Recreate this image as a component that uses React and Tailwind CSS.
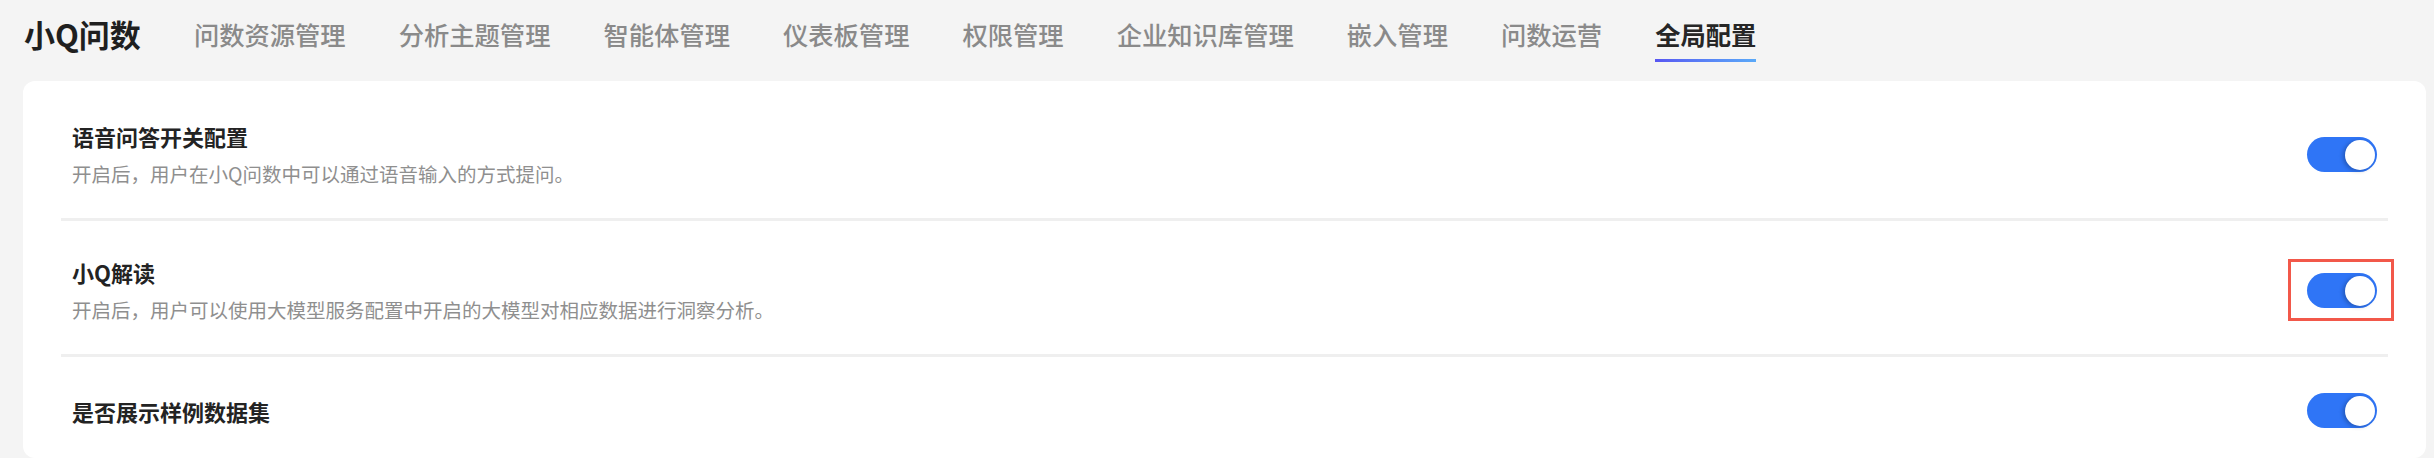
import React from 'react';

const navItems = ['问数资源管理', '分析主题管理', '智能体管理', '仪表板管理', '权限管理', '企业知识库管理', '嵌入管理', '问数运营', '全局配置'];

const settings = [
  { title: '语音问答开关配置', desc: '开启后，用户在小Q问数中可以通过语音输入的方式提问。' },
  { title: '小Q解读', desc: '开启后，用户可以使用大模型服务配置中开启的大模型对相应数据进行洞察分析。', marked: true },
  { title: '是否展示样例数据集' },
];

function Toggle({ marked }) {
  return (
    <div className="relative">
      <div className="relative h-[35px] w-[70px] rounded-full bg-[#2f75f6]">
        <div className="absolute right-[2px] top-[2.5px] h-[30px] w-[30px] rounded-full bg-white shadow-[-2px_1px_4px_rgba(0,0,0,0.25)]" />
      </div>
      {marked && (
        <div className="pointer-events-none absolute -bottom-[13px] -left-[19px] -right-[17px] -top-[14px] border-[3px] border-[#f2584a]" />
      )}
    </div>
  );
}

export default function App() {
  return (
    <div className="min-h-[458px] bg-[#f4f4f4] font-['Noto_Sans_CJK_SC','Noto_Sans',sans-serif]">
      <header className="flex h-[81px] items-start gap-[53px] pl-[24px] pt-[17px]">
        <span className="text-[31px] font-bold leading-[34px] text-[#1f1f1f]">小Q问数</span>
        {navItems.map((item, i) => {
          const active = i === navItems.length - 1;
          return (
            <div key={item} className="flex flex-col">
              <span className={`text-[25.3px] leading-[34px] ${active ? 'font-bold text-[#262626]' : 'font-medium text-[#8a8a8a]'}`}>
                {item}
              </span>
              {active && <div className="mt-[8px] h-[3px] bg-gradient-to-r from-[#5856f2] to-[#5aa9f8]" />}
            </div>
          );
        })}
      </header>

      <div className="ml-[23px] mr-[8px] rounded-[12px] bg-white px-[38px] pt-[4px]">
        {settings.map((s, i) => (
          <div
            key={s.title}
            className={`flex items-center justify-between px-[11px] pb-[30px] pt-[36px] ${i !== settings.length - 1 ? 'border-b-[3px] border-[#efefef]' : ''}`}
          >
            <div>
              <p className="text-[22px] font-semibold leading-[30px] text-[#232323]">{s.title}</p>
              {s.desc && <p className="mt-[9px] text-[19.5px] leading-[28px] text-[#8f8f8f]">{s.desc}</p>}
            </div>
            <Toggle marked={s.marked} />
          </div>
        ))}
      </div>
    </div>
  );
}
